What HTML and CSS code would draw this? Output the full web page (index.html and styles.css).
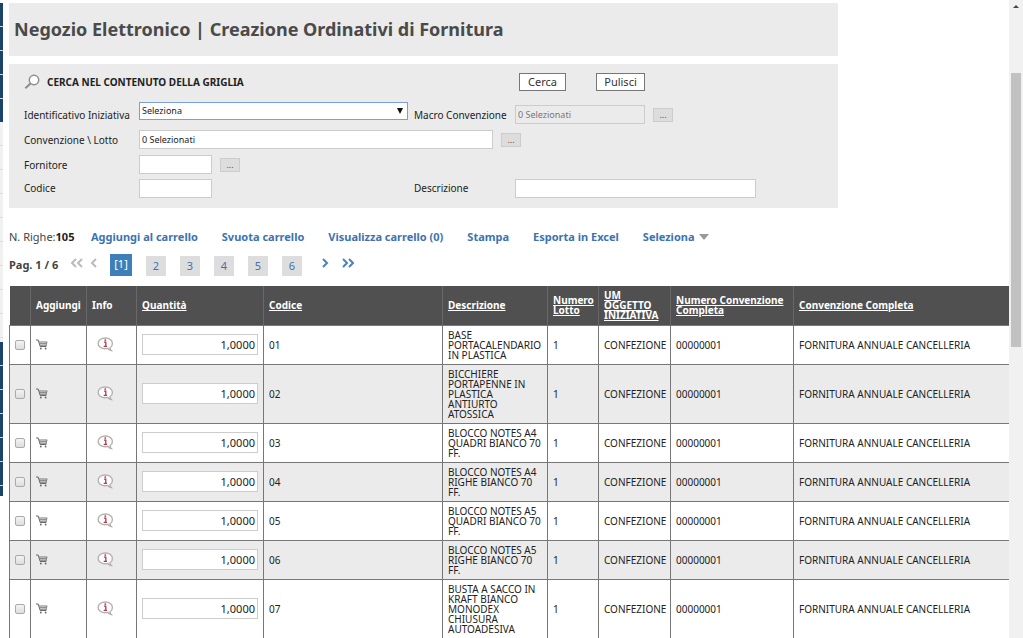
FILE: index.html
```html
<!DOCTYPE html>
<html lang="it">
<head>
<meta charset="utf-8">
<title>Negozio Elettronico | Creazione Ordinativi di Fornitura</title>
<link rel="stylesheet" href="styles.css">
</head>
<body>
<svg class="sprite" aria-hidden="true">
  <symbol id="cart" viewBox="0 0 12 11"><path d="M0 1h2.200l2 6.500h6" fill="none" stroke="#666" stroke-width="1"/><path d="M3 3h8.300M3.600 4.700h7.200M4 6.200h6.500" fill="none" stroke="#777" stroke-width="1"/><path d="M10.900 3l-.9 4.500" fill="none" stroke="#777" stroke-width=".8"/><circle cx="4.800" cy="9.500" r=".9" fill="#666"/><circle cx="9.600" cy="9.500" r=".9" fill="#666"/></symbol>
  <symbol id="info" viewBox="0 0 17 15"><path d="M8.300 1C4.200 1 1.200 3.300 1.200 6.400s3 5.400 7.100 5.400c1 0 1.800-.1 2.600-.4.7 1.100 1.800 1.900 3.300 2.100-.8-.8-1.200-1.700-1.100-2.800 1.500-1 2.300-2.500 2.300-4.300C15.400 3.300 12.400 1 8.300 1z" fill="#fff" stroke="#b5b0b0" stroke-width="1.400"/><path d="M7 5.200h1.800v4M6.700 9.400H10" fill="none" stroke="#b63a48" stroke-width="1.300"/><circle cx="8.300" cy="3.100" r=".95" fill="#b63a48"/></symbol>
</svg>
<div class="page">
  <div class="rail" aria-hidden="true"><div class="rail-dark rail-top"></div><div class="rail-light"></div><div class="rail-dark rail-bottom"></div></div>
  <main class="content">
    <header class="title-panel"><h1>Negozio Elettronico | Creazione Ordinativi di Fornitura</h1></header>
    <form class="search-panel">
      <div class="search-head">
        <svg class="lens" viewBox="0 0 16 16" aria-hidden="true"><circle cx="10" cy="6" r="4.700" fill="#fff" stroke="#8d8d8d" stroke-width="1.500"/><path d="M6.500 9.500L1.300 14.300" stroke="#8d8d8d" stroke-width="2"/></svg>
        <h2>CERCA NEL CONTENUTO DELLA GRIGLIA</h2>
        <div class="actions"><button class="btn" type="button">Cerca</button><button class="btn btn-wide" type="button">Pulisci</button></div>
      </div>
      <div class="field-row">
        <label for="iniziativa">Identificativo Iniziativa</label>
        <div class="select-wrap"><select id="iniziativa"><option>Seleziona</option></select></div>
        <label class="second" for="macro">Macro Convenzione</label>
        <input id="macro" class="medium" type="text" value="0 Selezionati" disabled>
        <button class="more" type="button">...</button>
      </div>
      <div class="field-row">
        <label for="lotto">Convenzione \ Lotto</label>
        <input id="lotto" class="long" type="text" value="0 Selezionati">
        <button class="more" type="button">...</button>
      </div>
      <div class="field-row">
        <label for="fornitore">Fornitore</label>
        <input id="fornitore" class="short" type="text">
        <button class="more" type="button">...</button>
      </div>
      <div class="field-row last">
        <label for="codice">Codice</label>
        <div class="slot"><input id="codice" class="short" type="text"></div>
        <label class="second" for="descrizione">Descrizione</label>
        <input id="descrizione" class="wide" type="text">
      </div>
    </form>
    <nav class="toolbar">
      <span class="count">N. Righe:<b>105</b></span>
      <a href="#">Aggiungi al carrello</a><a href="#">Svuota carrello</a><a href="#">Visualizza carrello (0)</a><a href="#">Stampa</a><a href="#">Esporta in Excel</a><a href="#" class="drop">Seleziona</a>
    </nav>
    <nav class="pager" aria-label="Pagine">
      <b>Pag. 1 / 6</b>
      <span class="arrows prev"><svg class="double" viewBox="0 0 14 10"><path d="M6 1L2 5l4 4M12 1L8 5l4 4"/></svg><svg class="single" viewBox="0 0 8 10"><path d="M6 1L2 5l4 4"/></svg></span>
      <span class="pages"><a class="current" href="#">[1]</a><a href="#">2</a><a href="#">3</a><a href="#">4</a><a href="#">5</a><a href="#">6</a></span>
      <span class="arrows next"><svg class="single" viewBox="0 0 8 10"><path d="M2 1l4 4-4 4"/></svg><svg class="double" viewBox="0 0 14 10"><path d="M2 1l4 4-4 4M8 1l4 4-4 4"/></svg></span>
    </nav>
    <table class="grid">
      <colgroup><col class="c-check"><col class="c-add"><col class="c-info"><col class="c-qty"><col class="c-code"><col class="c-desc"><col class="c-lot"><col class="c-um"><col class="c-num"><col></colgroup>
      <thead><tr><th></th><th>Aggiungi</th><th>Info</th><th><a href="#">Quantità</a></th><th><a href="#">Codice</a></th><th><a href="#">Descrizione</a></th><th><a href="#">Numero Lotto</a></th><th><a href="#">UM OGGETTO INIZIATIVA</a></th><th><a href="#">Numero Convenzione Completa</a></th><th><a href="#">Convenzione Completa</a></th></tr></thead>
      <tbody>
        <tr><td><input type="checkbox" aria-label="Riga 01"></td><td><svg class="cart"><use href="#cart"/></svg></td><td><svg class="info"><use href="#info"/></svg></td><td><input class="qty" type="text" value="1,0000" aria-label="Quantità 01"></td><td>01</td><td>BASE PORTACALENDARIO IN PLASTICA</td><td>1</td><td>CONFEZIONE</td><td>00000001</td><td>FORNITURA ANNUALE CANCELLERIA</td></tr>
        <tr><td><input type="checkbox" aria-label="Riga 02"></td><td><svg class="cart"><use href="#cart"/></svg></td><td><svg class="info"><use href="#info"/></svg></td><td><input class="qty" type="text" value="1,0000" aria-label="Quantità 02"></td><td>02</td><td>BICCHIERE PORTAPENNE IN PLASTICA ANTIURTO ATOSSICA</td><td>1</td><td>CONFEZIONE</td><td>00000001</td><td>FORNITURA ANNUALE CANCELLERIA</td></tr>
        <tr><td><input type="checkbox" aria-label="Riga 03"></td><td><svg class="cart"><use href="#cart"/></svg></td><td><svg class="info"><use href="#info"/></svg></td><td><input class="qty" type="text" value="1,0000" aria-label="Quantità 03"></td><td>03</td><td>BLOCCO NOTES A4 QUADRI BIANCO 70 FF.</td><td>1</td><td>CONFEZIONE</td><td>00000001</td><td>FORNITURA ANNUALE CANCELLERIA</td></tr>
        <tr><td><input type="checkbox" aria-label="Riga 04"></td><td><svg class="cart"><use href="#cart"/></svg></td><td><svg class="info"><use href="#info"/></svg></td><td><input class="qty" type="text" value="1,0000" aria-label="Quantità 04"></td><td>04</td><td>BLOCCO NOTES A4 RIGHE BIANCO 70 FF.</td><td>1</td><td>CONFEZIONE</td><td>00000001</td><td>FORNITURA ANNUALE CANCELLERIA</td></tr>
        <tr><td><input type="checkbox" aria-label="Riga 05"></td><td><svg class="cart"><use href="#cart"/></svg></td><td><svg class="info"><use href="#info"/></svg></td><td><input class="qty" type="text" value="1,0000" aria-label="Quantità 05"></td><td>05</td><td>BLOCCO NOTES A5 QUADRI BIANCO 70 FF.</td><td>1</td><td>CONFEZIONE</td><td>00000001</td><td>FORNITURA ANNUALE CANCELLERIA</td></tr>
        <tr><td><input type="checkbox" aria-label="Riga 06"></td><td><svg class="cart"><use href="#cart"/></svg></td><td><svg class="info"><use href="#info"/></svg></td><td><input class="qty" type="text" value="1,0000" aria-label="Quantità 06"></td><td>06</td><td>BLOCCO NOTES A5 RIGHE BIANCO 70 FF.</td><td>1</td><td>CONFEZIONE</td><td>00000001</td><td>FORNITURA ANNUALE CANCELLERIA</td></tr>
        <tr><td><input type="checkbox" aria-label="Riga 07"></td><td><svg class="cart"><use href="#cart"/></svg></td><td><svg class="info"><use href="#info"/></svg></td><td><input class="qty" type="text" value="1,0000" aria-label="Quantità 07"></td><td>07</td><td>BUSTA A SACCO IN KRAFT BIANCO MONODEX CHIUSURA AUTOADESIVA</td><td>1</td><td>CONFEZIONE</td><td>00000001</td><td>FORNITURA ANNUALE CANCELLERIA</td></tr>
      </tbody>
    </table>
  </main>
  <div class="scrollbar" aria-hidden="true"><div class="scroll-up"></div><div class="scroll-thumb"></div></div>
</div>
</body>
</html>
```
FILE: styles.css
```css
* { box-sizing: border-box; }
body { margin: 0; overflow: hidden; font: 10px/14px "Noto Sans", "Open Sans", sans-serif; color: #222; background: #fff; }
.sprite { display: none; }
.page { display: flex; }
.rail { width: 3px; flex: none; margin-right: 6px; padding-top: 3px; }
.rail-dark { background: repeating-linear-gradient(#1c4468 0 23px, #c5d4e0 23px 24px); }
.rail-top { height: 119px; }
.rail-light { height: 220px; background: repeating-linear-gradient(#f1f1f1 0 23px, #dcdcdc 23px 24px); }
.rail-bottom { height: 154px; }
.content { flex: 1; min-width: 0; padding-top: 3px; }
.title-panel, .search-panel { max-width: 829px; background: #ebebeb; }
.title-panel { padding: 13px 5px 14px; margin-bottom: 8px; }
h1 { margin: 0; font-size: 18px; line-height: 26px; color: #4a4a4a; font-weight: 700; }
.search-panel { padding: 9px 15px 9px; }
.search-head { display: flex; align-items: center; height: 18px; margin-bottom: 11px; }
.lens { width: 16px; height: 16px; margin-right: 7px; }
h2 { margin: 0; width: 472px; font-size: 10px; line-height: 16px; font-weight: 700; color: #222; }
.actions { display: flex; gap: 30px; }
.btn { width: 47px; height: 18px; padding: 0; font: 11px/14px "Noto Sans", sans-serif; color: #333; background: #fff; border: 1px solid #777; }
.btn-wide { width: 49px; }
.field-row { display: flex; align-items: center; height: 25px; }
.field-row.last { height: 22px; }
.field-row label { width: 115px; flex: none; }
.field-row label.second { width: 101px; margin-left: 6px; }
input[type="text"], select { height: 19px; margin: 0; padding: 0 2px; border: 1px solid #ccc; border-radius: 0; background: #fff; font: 9px/14px "Noto Sans", sans-serif; color: #222; }
.select-wrap { position: relative; align-self: flex-start; width: 269px; }
select { width: 100%; height: 18px; appearance: none; border: 1px solid #7a9fe0; display: block; }
.select-wrap::after { content: ""; position: absolute; right: 5px; top: 6px; border: 3px solid transparent; border-top: 6px solid #111; border-bottom: 0; }
.medium { width: 130px; }
input.medium:disabled { background: #ebebeb; color: #777; }
.long { width: 354px; }
.short { width: 73px; }
.slot { width: 269px; display: flex; }
.wide { width: 241px; }
.more { width: 20px; height: 14px; padding: 0; margin-left: 8px; border: 1px solid #ccc; background: #ddd; color: #555; font: 9px/10px "Noto Sans", sans-serif; }
a { color: #3d73b0; text-decoration: none; }
.toolbar { display: flex; gap: 24px; height: 20px; margin-top: 19px; align-items: center; font-size: 11px; font-weight: 700; white-space: nowrap; }
.count { width: 70px; margin-right: -12px; font-weight: 400; color: #444; }
.count b { color: #222; }
.drop::after { content: ""; display: inline-block; margin-left: 4px; border: 5px solid transparent; border-top: 6px solid #999; border-bottom: 0; vertical-align: 1px; }
.pager { display: flex; align-items: center; height: 24px; margin: 6px 0 9px; font-size: 11px; color: #444; }
.pager b { width: 61px; font-weight: 700; white-space: nowrap; }
.arrows { display: flex; gap: 6px; padding-bottom: 4px; fill: none; stroke-width: 2; }
.prev { width: 40px; stroke: #bbb; }
.next { margin-left: 19px; gap: 12px; stroke: #4b80c4; }
.double { width: 14px; height: 10px; }
.single { width: 8px; height: 10px; }
.pages { display: flex; gap: 14px; align-items: flex-end; }
.pages a { width: 20px; height: 20px; line-height: 20px; text-align: center; background: #ddd; }
.pages .current { width: 22px; height: 22px; background: #3f7fb8; color: #fff; }
.grid { width: 100%; table-layout: fixed; border-collapse: collapse; line-height: 10px; }
.grid th { height: 39px; padding: 0 5px; text-align: left; color: #fff; background: #505050; border-right: 1px solid #686868; font-weight: 700; }
.grid th a { color: #fff; text-decoration: underline; }
.grid td { padding: 4px 5px; border: 1px solid #777; vertical-align: middle; }
.grid td:last-child, .grid th:last-child { border-right: 0; }
.grid tbody tr:nth-child(even) { background: #ebebeb; }
.c-check { width: 21px; }
.c-add { width: 56px; }
.c-info { width: 50px; }
.c-qty { width: 127px; }
.c-code { width: 179px; }
.c-desc { width: 105px; }
.c-lot { width: 51px; }
.c-um { width: 72px; }
.c-num { width: 123px; }
.grid input[type="checkbox"] { appearance: none; display: block; width: 10px; height: 10px; margin: 0; border: 1px solid #aaa; border-radius: 2px; background: linear-gradient(#f4f4f4, #ddd); }
.grid input.qty { display: block; width: 100%; height: 21px; text-align: right; font-size: 11px; }
.cart { display: block; width: 12px; height: 11px; }
.info { display: block; width: 17px; height: 15px; margin-left: 5px; }
.scrollbar { width: 14px; flex: none; min-height: 100vh; background: #f1f1f1; padding: 5px 2px 0; }
.scroll-up { width: 0; margin: 0 auto; border: 3px solid transparent; border-bottom: 3px solid #444; border-top: 0; }
.scroll-thumb { height: 274px; margin-top: 65px; background: #c1c1c1; }
```
